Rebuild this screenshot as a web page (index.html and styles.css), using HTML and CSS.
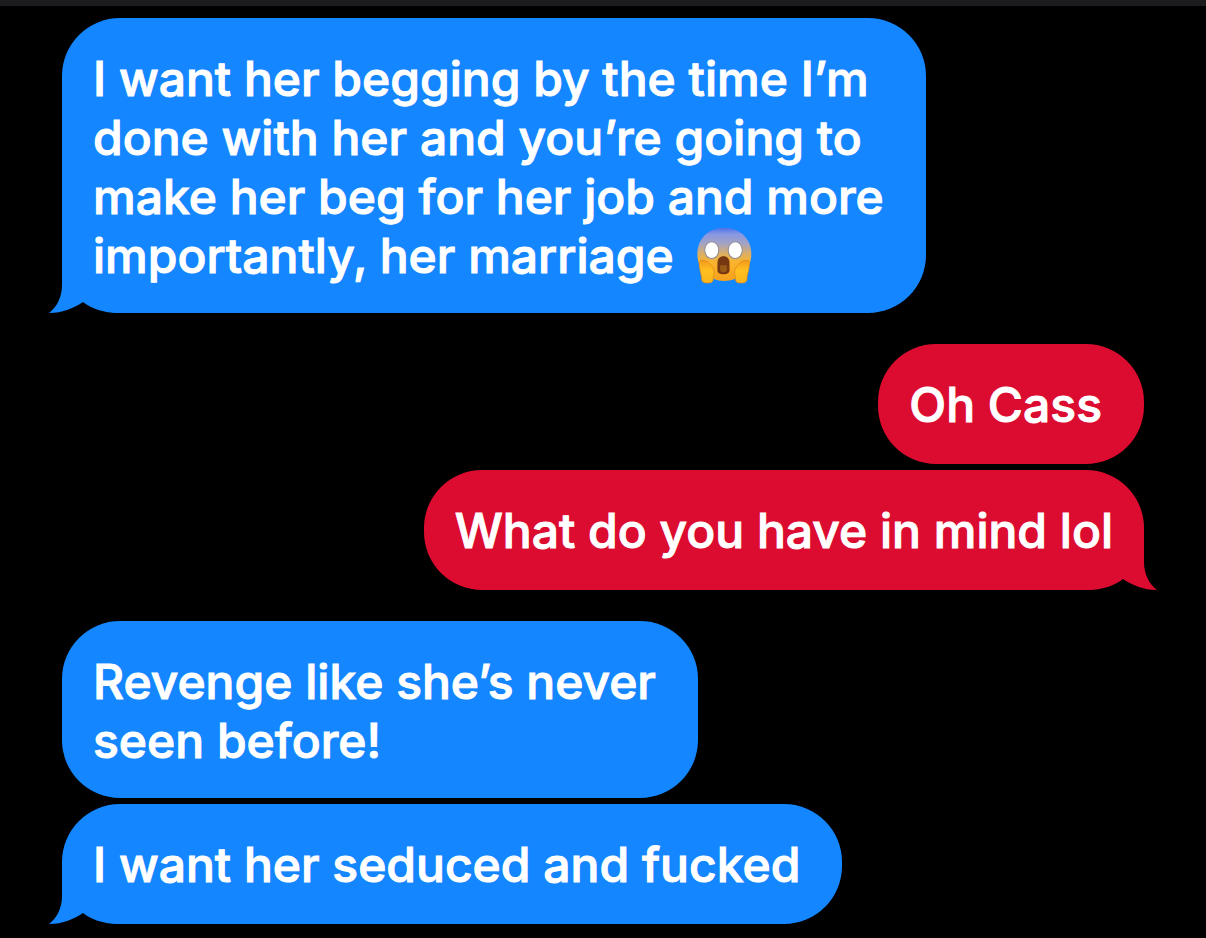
FILE: index.html
```html
<!DOCTYPE html>
<html lang="en">
<head>
<meta charset="utf-8">
<meta name="viewport" content="width=device-width, initial-scale=1">
<title>Messages</title>
<link rel="stylesheet" href="styles.css">
</head>
<body>
<main class="thread">
  <section class="group received">
    <p class="bubble tail">I want her begging by the time I’m<br>done with her and you’re going to<br>make her beg for her job and more<br>importantly, her marriage <svg class="emoji" viewBox="48 36 170 170" role="img" aria-label="Face screaming in fear">
      <defs>
        <linearGradient id="face" x1="0" y1="0" x2="0" y2="1"><stop offset="0" stop-color="#4b6fe8"/><stop offset=".12" stop-color="#8797e4"/><stop offset=".3" stop-color="#a3a3c4"/><stop offset=".48" stop-color="#d9ae68"/><stop offset=".65" stop-color="#fbb52c"/><stop offset="1" stop-color="#f5a01c"/></linearGradient>
        <linearGradient id="hand" x1="0" y1="0" x2="0" y2="1"><stop offset="0" stop-color="#f39a1c"/><stop offset=".45" stop-color="#ffc021"/><stop offset="1" stop-color="#f8b51c"/></linearGradient>
      </defs>
      <path fill="url(#face)" d="M132 38C84 38 52 72 52 116c0 46 34 81 80 81s81-35 81-81c0-44-33-78-81-78Z"/>
      <ellipse cx="95" cy="105" rx="21" ry="25" fill="#fff" stroke="#8e8b93" stroke-width="3"/>
      <ellipse cx="165" cy="105" rx="21" ry="25" fill="#fff" stroke="#8e8b93" stroke-width="3"/>
      <path fill="#763713" d="M130 123c-11 0-18 8-18 20v22c0 8 7 12 18 12s18-4 18-12v-22c0-12-7-20-18-20Z"/>
      <path fill="#9a5b16" d="M120 150h20v14c0 4-4 7-10 7s-10-3-10-7Z"/>
      <path fill="url(#hand)" stroke="#dd861b" stroke-width="2" d="M59 137c8-3 17-2 25 4 10 8 17 18 18 28 1 9-3 13-3 24 0 7-5 10-16 10s-18-3-18-10c0-18-11-36-6-56Z"/>
      <path fill="url(#hand)" stroke="#dd861b" stroke-width="2" d="M206 137c-8-3-17-2-25 4-10 8-17 18-18 28-1 9 3 13 3 24 0 7 5 10 16 10s18-3 18-10c0-18 11-36 6-56Z"/>
    </svg><svg class="tip" viewBox="0 0 72 60" aria-hidden="true"><path d="M13 0V32C13 44 8 54 0 60C14 60 25 55 34 49C42 55 52 60 72 60V0Z"/></svg></p>
  </section>
  <section class="group sent">
    <p class="bubble">Oh Cass</p>
    <p class="bubble tail">What do you have in mind lol<svg class="tip" viewBox="0 0 72 60" aria-hidden="true"><path d="M13 0V32C13 44 8 54 0 60C14 60 25 55 34 49C42 55 52 60 72 60V0Z"/></svg></p>
  </section>
  <section class="group received">
    <p class="bubble">Revenge like she’s never<br>seen before!</p>
    <p class="bubble tail">I want her seduced and fucked<svg class="tip" viewBox="0 0 72 60" aria-hidden="true"><path d="M13 0V32C13 44 8 54 0 60C14 60 25 55 34 49C42 55 52 60 72 60V0Z"/></svg></p>
  </section>
</main>
</body>
</html>
```
FILE: styles.css
```css
body { margin: 0; background: #000; }
.thread {
  display: flex;
  flex-direction: column;
  gap: 31px;
  padding: 12px 62px;
  border-top: 6px solid #1c1c1e;
  font: 500 48px/59px Inter, "Liberation Sans", sans-serif;
  -webkit-text-stroke: 1px #fff;
  color: #fff;
}
.group { display: flex; flex-direction: column; gap: 6px; align-items: flex-start; }
.sent { align-items: flex-end; }
.bubble {
  position: relative;
  z-index: 0;
  box-sizing: border-box;
  min-height: 120px;
  margin: 0;
  padding: 31px 42px 28px 31px;
  border-radius: 58px;
  background: #1486ff;
  white-space: nowrap;
}
.sent .bubble { background: #dc0b30; }
.sent .tail { padding-right: 31px; }
.emoji { width: 57px; height: 57px; margin: -8px 0 -8px 10px; vertical-align: -3px; }
.tip { position: absolute; z-index: -1; left: -13px; bottom: 0; width: 72px; height: 60px; fill: #1486ff; }
.sent .tip { left: auto; right: -13px; transform: scaleX(-1); fill: #dc0b30; }
```
